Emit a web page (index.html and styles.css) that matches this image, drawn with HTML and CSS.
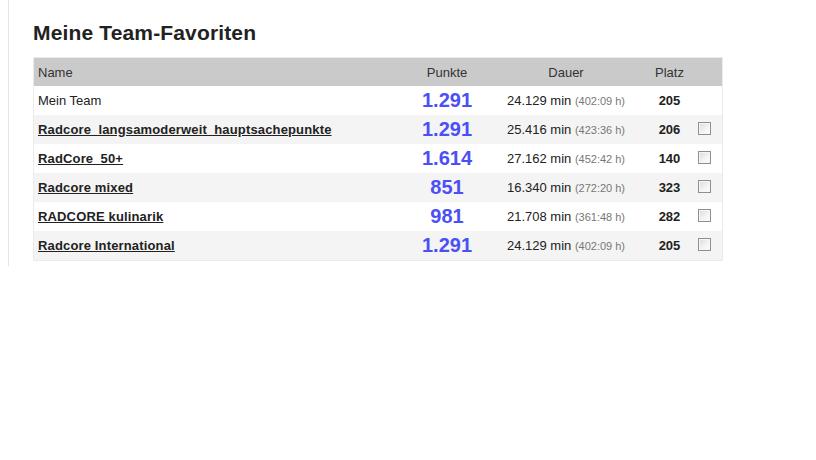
FILE: index.html
```html
<!DOCTYPE html>
<html lang="de">
<head>
<meta charset="utf-8">
<title>Meine Team-Favoriten</title>
<link rel="stylesheet" href="styles.css">
</head>
<body>
<div class="panel">
  <h2 class="title">Meine Team-Favoriten</h2>
  <table class="fav">
    <thead>
      <tr>
        <th class="c-name">Name</th>
        <th class="c-pts">Punkte</th>
        <th class="c-dur">Dauer</th>
        <th class="c-rank">Platz</th>
        <th class="c-chk"></th>
      </tr>
    </thead>
    <tbody>
      <tr>
        <td class="c-name">Mein Team</td>
        <td class="c-pts">1.291</td>
        <td class="c-dur">24.129 min <span class="hrs">(402:09 h)</span></td>
        <td class="c-rank">205</td>
        <td class="c-chk"></td>
      </tr>
      <tr>
        <td class="c-name"><a href="#">Radcore_langsamoderweit_hauptsachepunkte</a></td>
        <td class="c-pts">1.291</td>
        <td class="c-dur">25.416 min <span class="hrs">(423:36 h)</span></td>
        <td class="c-rank">206</td>
        <td class="c-chk"><input type="checkbox" class="box"></td>
      </tr>
      <tr>
        <td class="c-name"><a href="#">RadCore_50+</a></td>
        <td class="c-pts">1.614</td>
        <td class="c-dur">27.162 min <span class="hrs">(452:42 h)</span></td>
        <td class="c-rank">140</td>
        <td class="c-chk"><input type="checkbox" class="box"></td>
      </tr>
      <tr>
        <td class="c-name"><a href="#">Radcore mixed</a></td>
        <td class="c-pts">851</td>
        <td class="c-dur">16.340 min <span class="hrs">(272:20 h)</span></td>
        <td class="c-rank">323</td>
        <td class="c-chk"><input type="checkbox" class="box"></td>
      </tr>
      <tr>
        <td class="c-name"><a href="#">RADCORE kulinarik</a></td>
        <td class="c-pts">981</td>
        <td class="c-dur">21.708 min <span class="hrs">(361:48 h)</span></td>
        <td class="c-rank">282</td>
        <td class="c-chk"><input type="checkbox" class="box"></td>
      </tr>
      <tr>
        <td class="c-name"><a href="#">Radcore International</a></td>
        <td class="c-pts">1.291</td>
        <td class="c-dur">24.129 min <span class="hrs">(402:09 h)</span></td>
        <td class="c-rank">205</td>
        <td class="c-chk"><input type="checkbox" class="box"></td>
      </tr>
    </tbody>
  </table>
</div>
</body>
</html>
```

FILE: styles.css
```css
html, body {
  background: #ffffff;
}
body {
  margin: 0 0 0 8px;
  font-family: "Liberation Sans", Arial, sans-serif;
  color: #222;
}
.panel {
  border-left: 1px solid #e6e6e6;
  padding: 21px 0 5px 24px;
  width: 760px;
}
.title {
  margin: 0 0 12px 0;
  font-size: 21px;
  line-height: 24px;
  font-weight: bold;
  letter-spacing: 0.15px;
  color: #222;
}
.fav {
  width: 690px;
  border-collapse: collapse;
  border: 1px solid #ebebeb;
  font-size: 13px;
}
.fav th {
  background: #cacaca;
  color: #333;
  font-weight: normal;
  height: 28px;
  padding: 0;
  text-align: center;
}
.fav th.c-name {
  text-align: left;
  padding-left: 4px;
}
.fav td {
  height: 29px;
  padding: 0;
  text-align: center;
  vertical-align: middle;
}
.fav tbody tr:nth-child(even) td {
  background: #f4f4f4;
}
.fav td.c-name {
  text-align: left;
  padding-left: 4px;
}
.fav a {
  color: #222;
  font-weight: bold;
  letter-spacing: 0.15px;
  text-decoration: underline;
}
.c-pts {
  width: 80px;
}
td.c-pts {
  color: #4b50f6;
  font-weight: bold;
  font-size: 20px;
}
.c-dur {
  width: 158px;
}
.hrs {
  font-size: 11px;
  color: #777;
}
.c-rank {
  width: 49px;
}
td.c-rank {
  font-weight: bold;
}
.c-chk {
  width: 28px;
}
td.c-chk {
  text-align: left;
}
.box {
  -webkit-appearance: none;
  appearance: none;
  display: block;
  box-sizing: border-box;
  width: 13px;
  height: 13px;
  margin: 0 0 2px 4px;
  border: 1px solid #8f8f8f;
  background: linear-gradient(135deg, #dcdcdc 0%, #f4f4f4 60%, #ffffff 100%);
  box-shadow: inset 0 0 0 1px #f6f6f6;
}
```
